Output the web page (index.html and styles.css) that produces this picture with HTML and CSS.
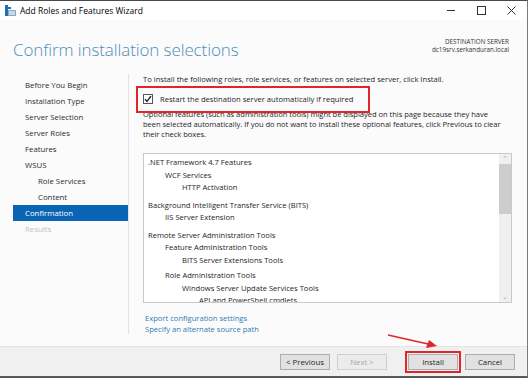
FILE: index.html
```html
<!DOCTYPE html>
<html>
<head>
    <title>Add Roles and Features Wizard</title>
    <link rel="stylesheet" href="styles.css">
</head>
<body>
<div class="window">
    <div class="titlebar">
        <svg class="app-icon" width="11" height="11" viewBox="0 0 11 11">
            <rect x="0" y="0" width="3" height="11" fill="#1f6fb5"/>
            <rect x="3" y="2" width="3" height="2" fill="#1f6fb5"/>
            <rect x="3" y="5" width="8" height="6" fill="#8fa9bf"/>
            <rect x="4" y="6" width="6" height="4" fill="#c9d8e6"/>
        </svg>
        <span class="title">Add Roles and Features Wizard</span>
        <div class="controls">
            <svg width="9" height="9" viewBox="0 0 9 9"><line x1="0" y1="4.5" x2="8" y2="4.5" stroke="#333" stroke-width="1"/></svg>
            <svg width="9" height="9" viewBox="0 0 9 9"><rect x="0.5" y="0.5" width="8" height="8" fill="none" stroke="#333" stroke-width="1"/></svg>
            <svg width="9" height="9" viewBox="0 0 9 9"><path d="M0.5 0.5 L8.5 8.5 M8.5 0.5 L0.5 8.5" stroke="#333" stroke-width="1"/></svg>
        </div>
    </div>

    <div class="main">
        <div class="header">
            <h1>Confirm installation selections</h1>
            <div class="dest">
                <div>DESTINATION SERVER</div>
                <div>dc19srv.serkanduran.local</div>
            </div>
        </div>

        <div class="body">
            <ul class="nav">
                <li>Before You Begin</li>
                <li>Installation Type</li>
                <li>Server Selection</li>
                <li>Server Roles</li>
                <li>Features</li>
                <li>WSUS</li>
                <li class="sub">Role Services</li>
                <li class="sub">Content</li>
                <li class="active">Confirmation</li>
                <li class="disabled">Results</li>
            </ul>

            <div class="content">
                <p class="intro">To install the following roles, role services, or features on selected server, click Install.</p>
                <label class="restart">
                    <span class="check">
                        <svg width="8" height="8" viewBox="0 0 8 8"><path d="M1 4.2 L3 6.5 L7 1" fill="none" stroke="#222" stroke-width="1.3"/></svg>
                    </span>
                    Restart the destination server automatically if required
                </label>
                <p class="note">Optional features (such as administration tools) might be displayed on this page because they have<br>been selected automatically. If you do not want to install these optional features, click Previous to clear their check boxes.</p>

                <div class="listbox">
                    <div class="items">
                        <div class="group">
                            <div class="lv0">.NET Framework 4.7 Features</div>
                            <div class="lv1">WCF Services</div>
                            <div class="lv2">HTTP Activation</div>
                        </div>
                        <div class="group">
                            <div class="lv0">Background Intelligent Transfer Service (BITS)</div>
                            <div class="lv1">IIS Server Extension</div>
                        </div>
                        <div class="group">
                            <div class="lv0">Remote Server Administration Tools</div>
                            <div class="lv1">Feature Administration Tools</div>
                            <div class="lv2">BITS Server Extensions Tools</div>
                            <div class="lv1 subgroup">Role Administration Tools</div>
                            <div class="lv2">Windows Server Update Services Tools</div>
                            <div class="lv3">API and PowerShell cmdlets</div>
                        </div>
                    </div>
                    <div class="scrollbar">
                        <span class="arrow">&#8963;</span>
                        <div class="thumb"></div>
                        <span class="arrow down">&#8964;</span>
                    </div>
                </div>

                <div class="links">
                    <a href="#">Export configuration settings</a>
                    <a href="#">Specify an alternate source path</a>
                </div>
            </div>
        </div>
    </div>

    <div class="footer">
        <button>&lt; Previous</button>
        <button disabled>Next &gt;</button>
        <button class="install">Install</button>
        <button>Cancel</button>
    </div>

    <svg class="pointer" width="528" height="378" viewBox="0 0 528 378">
        <line x1="388" y1="335" x2="428" y2="344" stroke="#e0262b" stroke-width="1.5"/>
        <path d="M437 346 L426 348 L429 340 Z" fill="#e0262b"/>
    </svg>
</div>
</body>
</html>
```

FILE: styles.css
```css
body {
    margin: 0;
    font-family: "Open Sans", "Noto Sans", sans-serif;
    color: #1e1e1e;
}

.window {
    position: relative;
    width: 528px;
    height: 378px;
    display: flex;
    flex-direction: column;
    box-sizing: border-box;
    border-top: 1px solid #4a4a4a;
    border-right: 1px solid #7a7a7a;
    border-bottom: 2px solid #5a5a5a;
    background: #fbfbfb;
    overflow: hidden;
}

.titlebar {
    height: 19px;
    display: flex;
    align-items: center;
    background: #ffffff;
    padding-left: 5px;
}

.app-icon {
    margin-right: 4px;
}

.title {
    font-size: 8.5px;
    color: #000;
}

.controls {
    margin-left: auto;
    display: flex;
    gap: 21px;
    margin-right: 11px;
}

.main {
    flex: 1;
    display: flex;
    flex-direction: column;
}

.header {
    height: 52px;
    display: flex;
    justify-content: space-between;
    padding: 0 18px 0 13px;
}

h1 {
    margin: 18px 0 0;
    font-size: 17px;
    font-weight: 300;
    color: #4f8db8;
    letter-spacing: -0.1px;
}

.dest {
    margin-top: 18px;
    text-align: right;
    font-size: 6.3px;
    line-height: 8px;
    color: #333;
}

.body {
    flex: 1;
    display: flex;
    padding-top: 2px;
}

.nav {
    list-style: none;
    margin: 0 0 12px 13px;
    padding: 3px 0 0;
    width: 115px;
    border-right: 1px solid #e2e2e2;
    font-size: 7.8px;
}

.nav li {
    height: 16px;
    line-height: 16px;
    padding-left: 12px;
    color: #2b2b2b;
}

.nav li.sub {
    padding-left: 25px;
}

.nav li.active {
    background: #0a64b4;
    color: #ffffff;
}

.nav li.disabled {
    color: #c3c3c3;
}

.content {
    flex: 1;
    padding: 0 15px 0 14px;
    font-size: 7.6px;
}

.intro {
    margin: 0;
    line-height: 11px;
}

.restart {
    position: relative;
    display: flex;
    align-items: center;
    height: 12px;
    margin-top: 8px;
}

.restart::after {
    content: "";
    position: absolute;
    left: -7px;
    top: -7px;
    width: 230px;
    height: 23px;
    border: 2px solid #e0262b;
}

.check {
    width: 8px;
    height: 8px;
    border: 1px solid #555;
    background: #fff;
    margin-right: 7px;
    display: flex;
    align-items: center;
    justify-content: center;
}

.note {
    margin: 4px 0 0;
    line-height: 10px;
    letter-spacing: -0.05px;
}

.listbox {
    margin-top: 14px;
    height: 148px;
    border: 1px solid #c9c9c9;
    background: #fff;
    display: flex;
}

.items {
    flex: 1;
    overflow: hidden;
    padding: 2px 0 0 4px;
}

.items div {
    line-height: 12.5px;
    white-space: nowrap;
}

.group + .group {
    margin-top: 5px;
}

.subgroup {
    margin-top: 3px;
}

.lv1 { padding-left: 17px; }
.lv2 { padding-left: 34px; }
.lv3 { padding-left: 51px; }

.scrollbar {
    width: 12px;
    background: #f0f0f0;
    display: flex;
    flex-direction: column;
    align-items: center;
}

.arrow {
    height: 10px;
    font-size: 7px;
    line-height: 10px;
    color: #a8a8a8;
}

.thumb {
    width: 12px;
    height: 50px;
    background: #cdcdcd;
}

.arrow.down {
    margin-top: auto;
}

.links {
    margin-top: 10px;
    padding-left: 2px;
    display: flex;
    flex-direction: column;
}

.links a {
    color: #2e7bb5;
    text-decoration: none;
    line-height: 11px;
}

.footer {
    height: 30px;
    border-top: 1px solid #e4e4e4;
    background: #f0f0f0;
    display: flex;
    align-items: center;
    padding-left: 280px;
    box-sizing: border-box;
}

.footer button {
    width: 50px;
    height: 16px;
    margin-right: 7px;
    padding: 0;
    font-family: "Open Sans", "Noto Sans", sans-serif;
    font-size: 7.8px;
    color: #1e1e1e;
    background: #e1e1e1;
    border: 1px solid #adadad;
}

.footer button:disabled {
    color: #a6a6a6;
    background: #ececec;
    border-color: #cfcfcf;
}

.footer button.install {
    margin-left: 14px;
    outline: 2px solid #e0262b;
    outline-offset: 1px;
}

.pointer {
    position: absolute;
    left: 0;
    top: -1px;
    pointer-events: none;
}
```
